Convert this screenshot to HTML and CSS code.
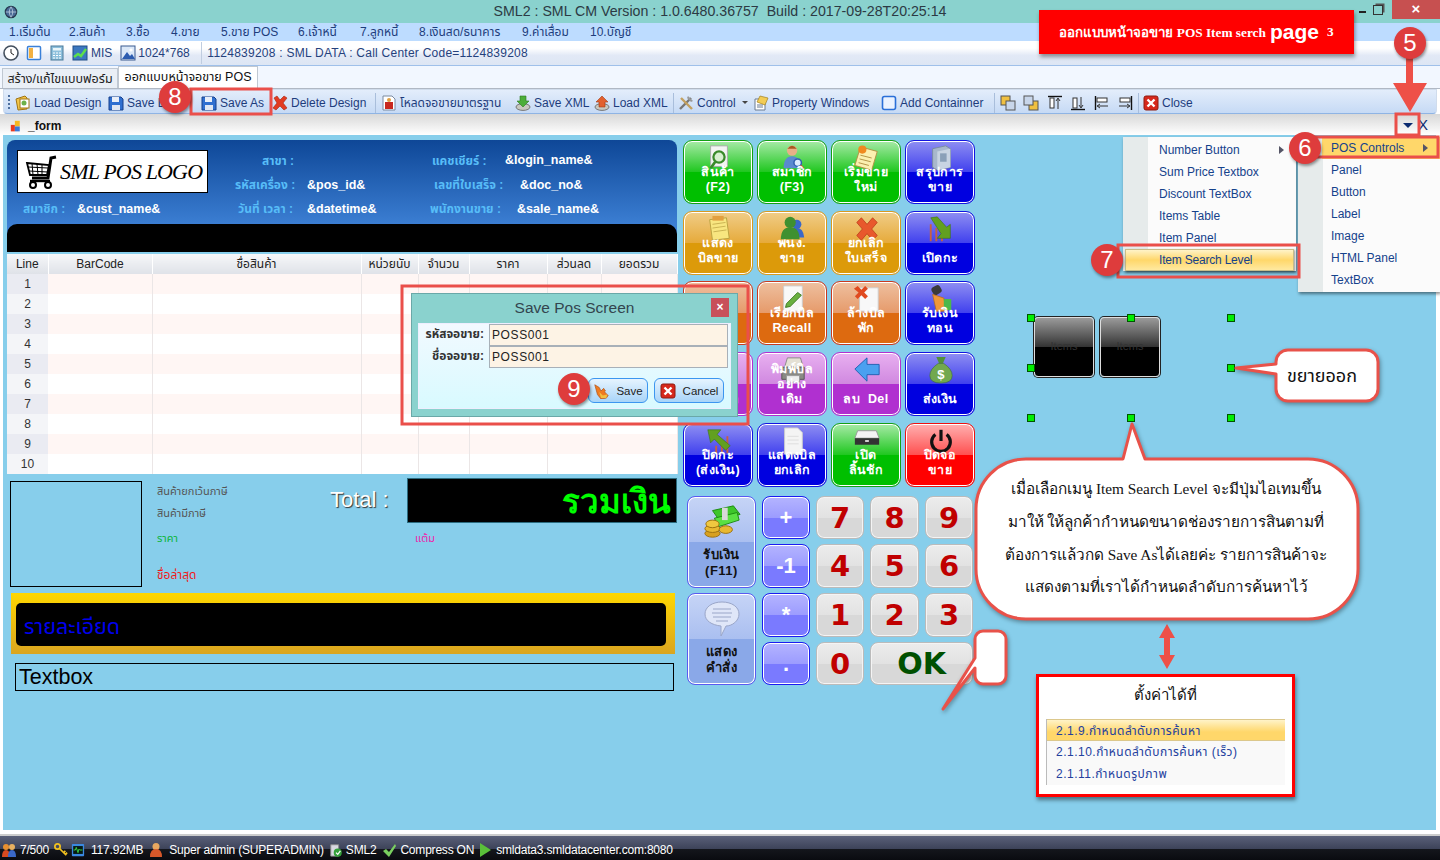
FILE: index.html
```html
<!DOCTYPE html>
<html lang="th">
<head>
<meta charset="utf-8">
<title>SML2 POS Designer</title>
<link rel="stylesheet" href="styles.css">
</head>
<body>
<svg class="defs" width="0" height="0" aria-hidden="true">
  <symbol id="i-win" viewBox="0 0 16 16"><circle cx="8" cy="8" r="6.5" fill="#4a6a96" stroke="#27384f" stroke-width="1.4"/><path d="M2 8h12M8 2q-4 6 0 12M8 2q4 6 0 12" stroke="#c8d8e8" fill="none" stroke-width=".8"/></symbol>
  <symbol id="i-floppy" viewBox="0 0 16 16"><path d="M1 2h12l2 2v11H1z" fill="#2f6fd0" stroke="#16408c"/><rect x="4" y="2" width="7" height="5" fill="#e8eef8"/><rect x="4" y="10" width="8" height="5" fill="#dfe6f2"/></symbol>
  <symbol id="i-load" viewBox="0 0 16 16"><path d="M1 4l9-3 2 2v11l-9 1z" fill="#f3c64a" stroke="#a07414"/><rect x="5" y="4" width="9" height="9" fill="#fff" stroke="#a07414"/><circle cx="9" cy="8" r="2.5" fill="#6cb14a"/></symbol>
  <symbol id="i-x" viewBox="0 0 16 16"><path d="M2 3l3-2 3 4 4-4 3 2-4 5 4 5-3 2-4-4-4 4-3-2 4-5z" fill="#e23b22" stroke="#a5240f" stroke-width=".6"/></symbol>
  <symbol id="i-docred" viewBox="0 0 16 16"><path d="M2 1h9l3 3v11H2z" fill="#fff" stroke="#7a8aa0"/><rect x="4" y="7" width="8" height="7" fill="#c8281e"/><circle cx="8" cy="5" r="2" fill="#e0a040"/></symbol>
  <symbol id="i-xmls" viewBox="0 0 16 16"><ellipse cx="8" cy="12" rx="7" ry="3.4" fill="#c8c8c0" stroke="#777"/><path d="M5 1h6v5h3l-6 6-6-6h3z" fill="#4cae3a" stroke="#2c7a20" stroke-width=".6"/></symbol>
  <symbol id="i-xmll" viewBox="0 0 16 16"><ellipse cx="8" cy="12" rx="7" ry="3.4" fill="#c8c8c0" stroke="#777"/><path d="M8 1l6 6h-3v5H5V7H2z" fill="#e2602e" stroke="#a33a12" stroke-width=".6"/></symbol>
  <symbol id="i-tools" viewBox="0 0 16 16"><path d="M2 14L13 3" stroke="#777" stroke-width="2.4"/><path d="M14 14L3 3" stroke="#c2a060" stroke-width="2.4"/><path d="M10 1l5 5-2 1-4-4z" fill="#999"/></symbol>
  <symbol id="i-prop" viewBox="0 0 16 16"><path d="M2 4h10v11H2z" fill="#fff" stroke="#6a7a90"/><path d="M7 1l8 2-3 7-8-3z" fill="#f2cc55" stroke="#a08020" stroke-width=".7"/><path d="M4 10h6M4 12h6" stroke="#6a7a90"/></symbol>
  <symbol id="i-box" viewBox="0 0 16 16"><rect x="1.5" y="1.5" width="13" height="13" rx="2" fill="#eaf2ff" stroke="#2a6fd8" stroke-width="1.6"/></symbol>
  <symbol id="i-al1" viewBox="0 0 16 16"><rect x="1" y="1" width="9" height="9" fill="#f0c040" stroke="#555"/><rect x="6" y="6" width="9" height="9" fill="#c8d6ea" stroke="#555"/></symbol>
  <symbol id="i-al2" viewBox="0 0 16 16"><rect x="6" y="6" width="9" height="9" fill="#f0c040" stroke="#555"/><rect x="1" y="1" width="9" height="9" fill="#c8d6ea" stroke="#555"/></symbol>
  <symbol id="i-al3" viewBox="0 0 16 16"><path d="M1 1.5h14" stroke="#111" stroke-width="1.4"/><rect x="3" y="3" width="4" height="10" fill="#fff" stroke="#333"/><path d="M11 14V4M9 6l2-3 2 3" stroke="#333" fill="none"/></symbol>
  <symbol id="i-al4" viewBox="0 0 16 16"><path d="M1 14.5h14" stroke="#111" stroke-width="1.4"/><rect x="3" y="3" width="4" height="10" fill="#fff" stroke="#333"/><path d="M11 2v10M9 10l2 3 2-3" stroke="#333" fill="none"/></symbol>
  <symbol id="i-al5" viewBox="0 0 16 16"><path d="M1.5 1v14" stroke="#111" stroke-width="1.4"/><rect x="3" y="3" width="10" height="4" fill="#fff" stroke="#333"/><path d="M14 11H4M6 9l-3 2 3 2" stroke="#333" fill="none"/></symbol>
  <symbol id="i-al6" viewBox="0 0 16 16"><path d="M14.5 1v14" stroke="#111" stroke-width="1.4"/><rect x="3" y="3" width="10" height="4" fill="#fff" stroke="#333"/><path d="M2 11h10M10 9l3 2-3 2" stroke="#333" fill="none"/></symbol>
  <symbol id="i-close" viewBox="0 0 16 16"><rect x="1" y="1" width="14" height="14" rx="2" fill="#d6281c" stroke="#8e1a10"/><path d="M4.5 4.5l7 7M11.5 4.5l-7 7" stroke="#fff" stroke-width="2.4"/></symbol>
  <symbol id="i-clock" viewBox="0 0 16 16"><circle cx="8" cy="8" r="7" fill="#fff" stroke="#44505e" stroke-width="1.6"/><path d="M8 4v4l3 2" stroke="#222" fill="none"/></symbol>
  <symbol id="i-panel" viewBox="0 0 16 16"><rect x="1.5" y="1.5" width="13" height="13" rx="1" fill="#fff" stroke="#3a80d8" stroke-width="1.5"/><rect x="3" y="3" width="4" height="10" fill="#f2b040"/></symbol>
  <symbol id="i-calc" viewBox="0 0 16 16"><rect x="2" y="1" width="12" height="14" fill="#8ec0dc" stroke="#4a7a9a"/><rect x="4" y="3" width="8" height="2.5" fill="#eaf6fa"/><path d="M4 8h8M4 10.5h8M4 13h8" stroke="#fff" stroke-dasharray="2 1"/></symbol>
  <symbol id="i-chart" viewBox="0 0 16 16"><rect x="1" y="1" width="14" height="14" fill="#3c78c0" stroke="#204e88"/><path d="M2 12l4-3 3 2 5-7" stroke="#5de04a" stroke-width="2.4" fill="none"/></symbol>
  <symbol id="i-pic" viewBox="0 0 16 16"><rect x="1" y="1" width="14" height="14" fill="#dbe8f8" stroke="#3a5a90"/><path d="M2 14l5-7 3 4 2-2 3 5z" fill="#2c5cb0"/><circle cx="11" cy="5" r="1.6" fill="#fff"/></symbol>
  <symbol id="i-form" viewBox="0 0 16 16"><rect x="1" y="6" width="5" height="8" fill="#e83a20"/><rect x="6" y="1" width="6" height="7" fill="#f6b820"/><rect x="6" y="8" width="6" height="6" fill="#3a78d8"/></symbol>
  <symbol id="i-cart" viewBox="0 0 34 34"><path d="M32 2l-5 1-3 20H8" stroke="#000" stroke-width="3" fill="none"/><path d="M3 8l22 2-2 10H6z" fill="#fff" stroke="#000" stroke-width="1.8"/><path d="M8 8l1 12M13 9l1 11M18 9l0 11M4 12l20 1M5 16l19 1" stroke="#000"/><path d="M6 26h20" stroke="#000" stroke-width="2.4"/><circle cx="9" cy="30" r="3" fill="#fff" stroke="#000" stroke-width="2"/><circle cx="24" cy="30" r="3" fill="#fff" stroke="#000" stroke-width="2"/></symbol>
  <symbol id="b-search" viewBox="0 0 30 30"><path d="M6 2h18v22H6z" fill="#f4f4f4" stroke="#aaa"/><circle cx="15" cy="14" r="6" fill="#d8f0d0" stroke="#3a8a2a" stroke-width="2.4"/><path d="M11 19l-5 7" stroke="#3a8a2a" stroke-width="3"/></symbol>
  <symbol id="b-member" viewBox="0 0 30 30"><circle cx="14" cy="7" r="5.5" fill="#e8b088"/><path d="M9 5q5-6 10 0z" fill="#a85a20"/><path d="M5 26q0-13 9-13t9 13z" fill="#5a8ad0"/><circle cx="20" cy="20" r="4" fill="#dcecff" stroke="#3060b0" stroke-width="1.6"/><path d="M23 23l3 3" stroke="#d04040" stroke-width="2"/></symbol>
  <symbol id="b-note" viewBox="0 0 30 30"><path d="M8 3l18 5-6 20-18-5z" fill="#fbf0b0" stroke="#b09040"/><path d="M8 12l12 3M7 16l12 3M6 20l11 3" stroke="#b09040"/><circle cx="10" cy="6" r="4.4" fill="#f08a20"/></symbol>
  <symbol id="b-server" viewBox="0 0 30 30"><path d="M6 5l14-3 5 3v20l-14 3-5-3z" fill="#a8b8cc" stroke="#788aa0"/><path d="M11 8l14-3v20l-14 3z" fill="#c8d4e2"/><rect x="14" y="10" width="7" height="9" fill="#8aa0b8"/></symbol>
  <symbol id="b-bill" viewBox="0 0 30 30"><path d="M5 5l18-2 3 22-18 2z" fill="#f8e680" stroke="#b8a040"/><path d="M8 10l14-2M8 14l14-2M9 18l14-2" stroke="#c8b050"/><rect x="8" y="1" width="12" height="5" fill="#e2a040"/></symbol>
  <symbol id="b-users" viewBox="0 0 30 30"><circle cx="19" cy="10" r="5" fill="#3a68c8"/><path d="M12 24q0-10 7-10t8 10z" fill="#3a68c8"/><circle cx="12" cy="8" r="6" fill="#3f9030"/><path d="M2 26q0-13 10-13t10 13z" fill="#3f9030"/></symbol>
  <symbol id="b-cross" viewBox="0 0 30 30"><path d="M4 8l5-5 6 7 6-7 5 5-6 7 6 7-5 5-6-7-6 7-5-5 6-7z" fill="#e8582c" stroke="#b83a18" stroke-width=".8"/></symbol>
  <symbol id="b-down" viewBox="0 0 30 30"><path d="M4 28V10M10 28V14M16 28V20" stroke="#c86040" stroke-width="2"/><path d="M4 3l7-1 10 11 4-3v15H11l4-5z" fill="#62a020" stroke="#3c7010" stroke-width=".6"/></symbol>
  <symbol id="b-recall" viewBox="0 0 30 30"><path d="M5 1h20v27H5z" fill="#f8f8f8" stroke="#ccc"/><path d="M8 20l12-12 4 3-12 12-5 1z" fill="#6ab040" stroke="#3c7a20"/></symbol>
  <symbol id="b-clear" viewBox="0 0 30 30"><path d="M7 3h20v25H7z" fill="#f8f8f8" stroke="#ccc"/><path d="M1 4l4-3 4 4 4-4 3 3-4 4 4 4-3 3-4-4-4 4-3-3 4-4z" fill="#e04a20"/></symbol>
  <symbol id="b-hand" viewBox="0 0 30 30"><rect x="5" y="1" width="10" height="9" rx="3" fill="#3a3a3a" transform="rotate(-30 10 5)"/><path d="M6 10l12 4 3 14H10z" fill="#f09838" stroke="#b86a18" stroke-width=".8"/><rect x="18" y="15" width="8" height="12" fill="#4cb84c"/></symbol>
  <symbol id="b-print" viewBox="0 0 30 30"><path d="M9 2h14l3 10H6z" fill="#e4e0d4" stroke="#888"/><path d="M3 12h24v13H3z" fill="#8a8a84" stroke="#555"/><path d="M8 21h14v7H8z" fill="#eee" stroke="#999"/><circle cx="15" cy="14" r="2" fill="#e2a020"/></symbol>
  <symbol id="b-left" viewBox="0 0 30 30"><path d="M2 14L15 2v7h13v11H15v7z" fill="#4aa0f0" stroke="#2060b0"/></symbol>
  <symbol id="b-bag" viewBox="0 0 30 30"><path d="M10 1h10l-3 7h-4z" fill="#52903a"/><path d="M12 8h6q9 6 9 13 0 8-12 8T3 21q0-7 9-13z" fill="#72a84e" stroke="#3c7028" stroke-width=".6"/><text x="15" y="25" text-anchor="middle" class="bag-t">$</text></symbol>
  <symbol id="b-up" viewBox="0 0 30 30"><path d="M12 28V20M18 28V16M24 28V10" stroke="#c86040" stroke-width="2"/><path d="M3 3h14l-4 5 14 12-5 5L10 13l-4 4z" fill="#62a020" stroke="#3c7010" stroke-width=".6"/></symbol>
  <symbol id="b-doc" viewBox="0 0 30 30"><path d="M6 1h14l5 5v23H6z" fill="#f4f4f4" stroke="#ccc"/><path d="M9 10h12M9 14h12M9 18h12" stroke="#ddd"/></symbol>
  <symbol id="b-drawer" viewBox="0 0 30 30"><path d="M5 4h20l3 8H2z" fill="#f4f4f4" stroke="#999"/><path d="M2 12h26v7H2z" fill="#333"/><rect x="13" y="14" width="4" height="2" fill="#ddd"/></symbol>
  <symbol id="b-power" viewBox="0 0 30 30"><path d="M9 8a10 10 0 1 0 12 0" fill="none" stroke="#111" stroke-width="3.4"/><path d="M15 3v12" stroke="#111" stroke-width="3.4"/></symbol>
  <symbol id="b-cash" viewBox="0 0 40 36"><path d="M10 6l22-5 7 9-22 6z" fill="#3ec62a" stroke="#1c8a10"/><path d="M12 14l24-6 2 8-22 7z" fill="#5ae042" stroke="#1c8a10"/><rect x="20" y="3" width="6" height="13" fill="#d8d8d8"/><ellipse cx="10" cy="30" rx="8" ry="4" fill="#d8a020" stroke="#9a7010"/><ellipse cx="10" cy="25" rx="8" ry="4" fill="#e8b830" stroke="#9a7010"/><ellipse cx="10" cy="20" rx="7" ry="4" fill="#f0c840" stroke="#9a7010"/><ellipse cx="24" cy="26" rx="7" ry="4" fill="#e8b830" stroke="#9a7010"/></symbol>
  <symbol id="b-bubble" viewBox="0 0 36 36"><path d="M18 1c10 0 17 5 17 12s-7 12-13 12l-5 10 0-10C8 24 1 20 1 13S8 1 18 1z" fill="#dfe6f8" stroke="#9aa6c8"/><path d="M9 8h18M8 12h20M9 16h18M12 20h12" stroke="#9aa6c8"/></symbol>
  <symbol id="s-users" viewBox="0 0 16 16"><circle cx="5" cy="5" r="3" fill="#e89030"/><path d="M1 15q0-7 4-7t4 7z" fill="#d84a20"/><circle cx="11" cy="5" r="3" fill="#e8b060"/><path d="M7 15q0-7 4-7t4 7z" fill="#3a68c8"/></symbol>
  <symbol id="s-key" viewBox="0 0 16 16"><circle cx="4" cy="4" r="3" fill="none" stroke="#f0c020" stroke-width="2"/><path d="M6 6l8 8M11 11l2-2M13 13l2-2" stroke="#f0c020" stroke-width="2"/></symbol>
  <symbol id="s-mon" viewBox="0 0 16 16"><rect x="1" y="1" width="14" height="14" rx="1" fill="#3a88e0"/><rect x="2.5" y="3.5" width="11" height="9" fill="#071a10"/><path d="M3 8h2l1-3 2 6 1-4 1 1h3" stroke="#3ce04a" fill="none"/></symbol>
  <symbol id="s-user" viewBox="0 0 16 16"><circle cx="8" cy="4.5" r="3.5" fill="#e8a860"/><path d="M2 15q0-8 6-8t6 8z" fill="#d8582a"/></symbol>
  <symbol id="s-db" viewBox="0 0 16 16"><path d="M2 2h9v13H2z" fill="#d8d8e0" stroke="#888"/><circle cx="10" cy="11" r="4.6" fill="#34a03a"/><path d="M8 11l2 2 3-4" stroke="#fff" fill="none" stroke-width="1.4"/></symbol>
  <symbol id="s-check" viewBox="0 0 16 16"><path d="M2 9l3-2 3 3 6-8 1 2-7 11z" fill="#7ad060"/></symbol>
  <symbol id="s-play" viewBox="0 0 16 16"><path d="M3 1l11 7-11 7z" fill="#5ac03a"/></symbol>
  <symbol id="s-saveb" viewBox="0 0 18 18"><path d="M2 2l5 3 2 4 3-3 2 3-1 1 4 4-2 3-6 1-4-5z" fill="#f07a20" stroke="#a84a10" stroke-width=".7"/><path d="M7 10l4 4 5-1-1 4-6 0z" fill="#f2c040"/></symbol>
</svg>

<div class="app">
  <header class="titlebar">
    <svg class="winicon"><use href="#i-win"/></svg>
    <span class="title-text">SML2 : SML CM Version : 1.0.6480.36757&nbsp; Build : 2017-09-28T20:25:14</span>
    <div class="winbtns">
      <span class="win-min"></span>
      <span class="win-restore"></span>
      <span class="win-close">×</span>
    </div>
  </header>

  <nav class="menubar">
    <span>1.เริ่มต้น</span><span>2.สินค้า</span><span>3.ซื้อ</span><span>4.ขาย</span><span>5.ขาย POS</span><span>6.เจ้าหนี้</span><span>7.ลูกหนี้</span><span>8.เงินสด/ธนาคาร</span><span>9.ค่าเสื่อม</span><span>10.บัญชี</span>
  </nav>

  <div class="infobar">
    <svg class="ic"><use href="#i-clock"/></svg>
    <svg class="ic"><use href="#i-panel"/></svg>
    <svg class="ic"><use href="#i-calc"/></svg>
    <svg class="ic"><use href="#i-chart"/></svg>
    <span class="info-mis">MIS</span>
    <svg class="ic"><use href="#i-pic"/></svg>
    <span class="info-res">1024*768</span>
    <span class="info-text">1124839208 : SML DATA : Call Center Code=1124839208</span>
  </div>

  <div class="tabs">
    <span class="tab">สร้าง/แก้ไขแบบฟอร์ม</span>
    <span class="tab tab-on">ออกแบบหน้าจอขาย POS</span>
  </div>

  <div class="toolbar">
    <span class="grip"></span>
    <span class="tool"><svg class="ic"><use href="#i-load"/></svg>Load Design</span>
    <span class="tool"><svg class="ic"><use href="#i-floppy"/></svg>Save L</span>
    <span class="tool"><svg class="ic"><use href="#i-floppy"/></svg>Save As</span>
    <span class="tool"><svg class="ic"><use href="#i-x"/></svg>Delete Design</span>
    <span class="sep"></span>
    <span class="tool"><svg class="ic"><use href="#i-docred"/></svg>โหลดจอขายมาตรฐาน</span>
    <span class="tool"><svg class="ic"><use href="#i-xmls"/></svg>Save XML</span>
    <span class="tool"><svg class="ic"><use href="#i-xmll"/></svg>Load XML</span>
    <span class="sep"></span>
    <span class="tool"><svg class="ic"><use href="#i-tools"/></svg>Control<i class="caret"></i></span>
    <span class="tool"><svg class="ic"><use href="#i-prop"/></svg>Property Windows</span>
    <span class="tool"><svg class="ic"><use href="#i-box"/></svg>Add Containner</span>
    <span class="sep"></span>
    <span class="tool"><svg class="ic"><use href="#i-al1"/></svg></span>
    <span class="tool"><svg class="ic"><use href="#i-al2"/></svg></span>
    <span class="tool"><svg class="ic"><use href="#i-al3"/></svg></span>
    <span class="tool"><svg class="ic"><use href="#i-al4"/></svg></span>
    <span class="tool"><svg class="ic"><use href="#i-al5"/></svg></span>
    <span class="tool"><svg class="ic"><use href="#i-al6"/></svg></span>
    <span class="sep"></span>
    <span class="tool"><svg class="ic"><use href="#i-close"/></svg>Close</span>
  </div>

  <div class="formbar">
    <svg class="ic"><use href="#i-form"/></svg>
    <b>_form</b>
    <span class="form-ctl"><i class="form-drop"></i><span class="form-x">X</span></span>
  </div>

  <main class="canvas">
    <section class="pos-head">
      <div class="logo"><svg class="logo-cart"><use href="#i-cart"/></svg><span>SML POS LOGO</span></div>
      <span class="hl hl-branch">สาขา :</span>
      <span class="hl hl-posid">รหัสเครื่อง :</span>
      <span class="hl hl-date">วันที่ เวลา :</span>
      <span class="hl hl-member">สมาชิก :</span>
      <span class="hl hl-cashier">แคชเชียร์ :</span>
      <span class="hl hl-doc">เลขที่ใบเสร็จ :</span>
      <span class="hl hl-sale">พนักงานขาย :</span>
      <span class="hv hv-login">&amp;login_name&amp;</span>
      <span class="hv hv-pos">&amp;pos_id&amp;</span>
      <span class="hv hv-doc">&amp;doc_no&amp;</span>
      <span class="hv hv-cust">&amp;cust_name&amp;</span>
      <span class="hv hv-date">&amp;datetime&amp;</span>
      <span class="hv hv-sale">&amp;sale_name&amp;</span>
      <div class="head-band"></div>
    </section>

    <table class="items">
      <colgroup><col class="c1"><col class="c2"><col class="c3"><col class="c4"><col class="c5"><col class="c6"><col class="c7"><col class="c8"></colgroup>
      <thead><tr><th>Line</th><th>BarCode</th><th>ชื่อสินค้า</th><th>หน่วยนับ</th><th>จำนวน</th><th>ราคา</th><th>ส่วนลด</th><th>ยอดรวม</th></tr></thead>
      <tbody>
        <tr><td>1</td><td></td><td></td><td></td><td></td><td></td><td></td><td></td></tr>
        <tr><td>2</td><td></td><td></td><td></td><td></td><td></td><td></td><td></td></tr>
        <tr><td>3</td><td></td><td></td><td></td><td></td><td></td><td></td><td></td></tr>
        <tr><td>4</td><td></td><td></td><td></td><td></td><td></td><td></td><td></td></tr>
        <tr><td>5</td><td></td><td></td><td></td><td></td><td></td><td></td><td></td></tr>
        <tr><td>6</td><td></td><td></td><td></td><td></td><td></td><td></td><td></td></tr>
        <tr><td>7</td><td></td><td></td><td></td><td></td><td></td><td></td><td></td></tr>
        <tr><td>8</td><td></td><td></td><td></td><td></td><td></td><td></td><td></td></tr>
        <tr><td>9</td><td></td><td></td><td></td><td></td><td></td><td></td><td></td></tr>
        <tr><td>10</td><td></td><td></td><td></td><td></td><td></td><td></td><td></td></tr>
      </tbody>
    </table>

    <div class="img-box"></div>
    <span class="lab lab-tax0">สินค้ายกเว้นภาษี</span>
    <span class="lab lab-tax1">สินค้ามีภาษี</span>
    <span class="lab lab-price">ราคา</span>
    <span class="lab lab-point">แต้ม</span>
    <span class="lab lab-last">ชื่อล่าสุด</span>
    <span class="total-lab">Total :</span>
    <div class="total-box">รวมเงิน</div>
    <div class="detail"><div class="detail-in">รายละเอียด</div></div>
    <div class="textbox">Textbox</div>

    <div class="btns">
      <button class="pb green"><svg class="pi"><use href="#b-search"/></svg>สินค้า<br>(F2)</button>
      <button class="pb green"><svg class="pi"><use href="#b-member"/></svg>สมาชิก<br>(F3)</button>
      <button class="pb green"><svg class="pi"><use href="#b-note"/></svg>เริ่มขาย<br>ใหม่</button>
      <button class="pb blue"><svg class="pi"><use href="#b-server"/></svg>สรุปการ<br>ขาย</button>
      <button class="pb gold"><svg class="pi"><use href="#b-bill"/></svg>แสดง<br>บิลขาย</button>
      <button class="pb gold"><svg class="pi"><use href="#b-users"/></svg>พนง.<br>ขาย</button>
      <button class="pb gold"><svg class="pi"><use href="#b-cross"/></svg>ยกเลิก<br>ใบเสร็จ</button>
      <button class="pb blue"><svg class="pi"><use href="#b-down"/></svg>เปิดกะ</button>
      <button class="pb orange">พักบิล</button>
      <button class="pb orange"><svg class="pi"><use href="#b-recall"/></svg>เรียกบิล<br>Recall</button>
      <button class="pb orange"><svg class="pi"><use href="#b-clear"/></svg>ล้างบิล<br>พัก</button>
      <button class="pb blue"><svg class="pi"><use href="#b-hand"/></svg>รับเงิน<br>ทอน</button>
      <button class="pb purple">พิมพ์บิล</button>
      <button class="pb purple"><svg class="pi"><use href="#b-print"/></svg>พิมพ์บิล<br>อย่าง<br>เดิม</button>
      <button class="pb purple"><svg class="pi"><use href="#b-left"/></svg>ลบ&nbsp; Del</button>
      <button class="pb blue"><svg class="pi"><use href="#b-bag"/></svg>ส่งเงิน</button>
      <button class="pb blue"><svg class="pi"><use href="#b-up"/></svg>ปิดกะ<br>(ส่งเงิน)</button>
      <button class="pb blue"><svg class="pi"><use href="#b-doc"/></svg>แสดงบิล<br>ยกเลิก</button>
      <button class="pb green"><svg class="pi"><use href="#b-drawer"/></svg>เปิด<br>ลิ้นชัก</button>
      <button class="pb red"><svg class="pi"><use href="#b-power"/></svg>ปิดจอ<br>ขาย</button>
    </div>

    <div class="pad">
      <button class="big big-a"><svg class="big-i"><use href="#b-cash"/></svg>รับเงิน<br>(F11)</button>
      <button class="op">+</button><button class="key">7</button><button class="key">8</button><button class="key">9</button>
      <button class="op">-1</button><button class="key">4</button><button class="key">5</button><button class="key">6</button>
      <button class="big big-b"><svg class="big-i"><use href="#b-bubble"/></svg>แสดง<br>คำสั่ง</button>
      <button class="op">*</button><button class="key">1</button><button class="key">2</button><button class="key">3</button>
      <button class="op">.</button><button class="key">0</button><button class="key key-ok">OK</button>
    </div>

    <div class="item-b item-b1">Items</div>
    <div class="item-b item-b2">Items</div>
    <span class="hd hd1"></span><span class="hd hd2"></span><span class="hd hd3"></span><span class="hd hd4"></span><span class="hd hd5"></span><span class="hd hd6"></span><span class="hd hd7"></span><span class="hd hd8"></span>

    <div class="dialog">
      <div class="dlg-title">Save Pos Screen<span class="dlg-x">×</span></div>
      <div class="dlg-body">
        <div class="dlg-row"><label>รหัสจอขาย:</label><span class="dlg-in">POSS001</span></div>
        <div class="dlg-row"><label>ชื่อจอขาย:</label><span class="dlg-in">POSS001</span></div>
        <div class="dlg-btns">
          <span class="dlg-btn"><svg class="ic"><use href="#s-saveb"/></svg>Save</span>
          <span class="dlg-btn"><svg class="ic"><use href="#i-close"/></svg>Cancel</span>
        </div>
      </div>
    </div>

    <ul class="menu menu-l">
      <li>Number Button<i class="sub"></i></li><li>Sum Price Textbox</li><li>Discount TextBox</li><li>Items Table</li><li>Item Panel</li><li class="hot">Item Search Level</li>
    </ul>
    <ul class="menu menu-r">
      <li class="hot2">POS Controls<i class="sub"></i></li><li>Panel</li><li>Button</li><li>Label</li><li>Image</li><li>HTML Panel</li><li>TextBox</li>
    </ul>

    <div class="setbox">
      <h3>ตั้งค่าได้ที่</h3>
      <ol class="setlist">
        <li class="on">2.1.9.กำหนดลำดับการค้นหา</li>
        <li>2.1.10.กำหนดลำดับการค้นหา (เร็ว)</li>
        <li>2.1.11.กำหนดรูปภาพ</li>
      </ol>
    </div>
  </main>

  <footer class="status">
    <svg class="ic"><use href="#s-users"/></svg><span>7/500</span>
    <svg class="ic ic-n"><use href="#s-key"/></svg><svg class="ic ic-n ic-m"><use href="#s-mon"/></svg><span>117.92MB</span>
    <svg class="ic ic-u"><use href="#s-user"/></svg><span>Super admin (SUPERADMIN)</span>
    <svg class="ic ic-n"><use href="#s-db"/></svg><span>SML2</span>
    <svg class="ic"><use href="#s-check"/></svg><span class="st-comp">Compress ON</span>
    <svg class="ic"><use href="#s-play"/></svg><span>smldata3.smldatacenter.com:8080</span>
  </footer>

  <svg class="annot" viewBox="0 0 1440 860">
    <g class="ann-line">
      <rect x="191" y="89" width="80" height="25"/>
      <rect x="1396" y="114" width="23" height="21"/>
      <rect x="1297" y="137" width="141" height="20"/>
      <rect x="1118" y="245" width="181" height="32"/>
      <rect x="402" y="286" width="346" height="138"/>
    </g>
    <path class="ann-fill" d="M1406 55h7v28h14l-17 29-17-29h13z"/>
    <path class="ann-fill" d="M1167 624l8 14h-5v17h5l-8 14-8-14h5v-17h-5l8-14z"/>
    <g class="ann-call">
      <path d="M1026 459h97l9-35 13 35h163a50 50 0 0 1 50 50v60a50 50 0 0 1-50 50h-282a50 50 0 0 1-50-50v-60a50 50 0 0 1 50-50z"/>
      <path d="M1288 350h78a12 12 0 0 1 12 12v27a12 12 0 0 1-12 12h-78a12 12 0 0 1-12-12v-15l-40-6 40-4v-2a12 12 0 0 1 12-12z"/>
      <path d="M983 631h15a8 8 0 0 1 8 8v37a8 8 0 0 1-8 8h-15a8 8 0 0 1-8-8v-8l-32 41 32-51v-19a8 8 0 0 1 8-8z"/>
    </g>
  </svg>

  <div class="banner"><span>ออกแบบหน้าจอขาย POS Item serch</span><b>page</b><span class="banner-n">3</span></div>
  <span class="num n5">5</span><span class="num n6">6</span><span class="num n7">7</span><span class="num n8">8</span><span class="num n9">9</span>
  <span class="call-small">ขยายออก</span>
  <p class="call-big">เมื่อเลือกเมนู Item Search Level จะมีปุ่มไอเทมขึ้น<br>มาให้ ให้ลูกค้ากำหนดขนาดช่องรายการสินตามที่<br>ต้องการแล้วกด Save Asได้เลยค่ะ รายการสินค้าจะ<br>แสดงตามที่เราได้กำหนดลำดับการค้นหาไว้</p>
</div>
</body>
</html>
```

FILE: styles.css
```css
* { box-sizing: border-box; }
html, body { margin: 0; height: 100%; overflow: hidden; }
body { font: 12px "Liberation Sans", "Noto Sans", "Noto Sans Thai", "Loma", "Garuda", sans-serif; color: #15428b; }
.defs { position: absolute; }
.ic { width: 16px; height: 16px; flex: none; display: block; }
.bag-t { font: bold 14px "Liberation Sans", sans-serif; fill: #fff; }

.app { position: relative; width: 1440px; height: 860px; display: flex; flex-direction: column; background: #fff; overflow: hidden; }

.titlebar { height: 23px; background: #8ad2ce; display: flex; align-items: center; justify-content: center; position: relative; flex: none; }
.winicon { position: absolute; left: 4px; top: 5px; width: 14px; height: 14px; }
.title-text { font-size: 14.2px; color: #2c3a44; position: relative; top: -1px; }
.winbtns { position: absolute; right: 0; top: 0; display: flex; align-items: flex-start; }
.win-min { width: 7px; height: 2px; background: #222; margin: 11px 7px 0 0; }
.win-restore { width: 10px; height: 10px; border: 1.5px solid #333; margin: 5px 9px 0 0; box-shadow: 2px -2px 0 -0.5px #555; }
.win-close { width: 48px; height: 19px; background: #c75050; color: #fff; font: bold 15px/18px "Liberation Sans", sans-serif; text-align: center; }

.menubar { height: 18px; background: #bddcff; flex: none; display: grid; grid-template-columns: 60px 57px 45px 50px 77px 62px 59px 103px 68px 60px; padding-left: 9px; line-height: 18px; color: #1d3c7c; }

.infobar { height: 25px; flex: none; display: flex; align-items: center; background: linear-gradient(#fff 0 30%, #e2e9f6 60%, #dde6f4); border-bottom: 1px solid #9fc0ea; padding-left: 3px; color: #25417c; }
.infobar .ic { margin-right: 7px; }
.infobar .ic:nth-of-type(4) { margin-right: 3px; }
.info-mis { margin-right: 8px; }
.infobar .ic:nth-of-type(5) { margin-right: 2px; }
.info-res { width: 63px; }
.info-text { border-left: 1px solid #c0cde0; padding-left: 5px; height: 22px; line-height: 22px; letter-spacing: .25px; }

.tabs { height: 23px; flex: none; display: flex; align-items: flex-end; padding-left: 2px; background: #f2f7ff; border-bottom: 1px solid #b0b8c4; }
.tab { width: 116px; height: 20px; line-height: 21px; text-align: center; background: #eaeff6; border: 1px solid #c0c8d2; border-bottom: 0; color: #222; white-space: nowrap; overflow: hidden; font-size: 12.5px; }
.tab-on { width: 140px; height: 22px; line-height: 21px; background: #fff; color: #111; }

.toolbar { height: 25px; flex: none; margin: 0 3px; display: grid; grid-template-columns: 7px 93px 93px 71px 103px 6px 134px 79px 79px 5px 75px 128px 113px 6px 23px 24px 23px 24px 23px 21px 5px auto; padding: 2px 0 0 4px; align-items: center; background: linear-gradient(#e3edfb, #c6daf5); border: 1px solid #d0dcec; border-bottom: 1px solid #8fb4e4; border-radius: 0 0 4px 4px; }
.grip { width: 2px; height: 16px; background: repeating-linear-gradient(#4d6f9f 0 2px, transparent 2px 4px); }
.tool { display: flex; align-items: center; gap: 3px; white-space: nowrap; overflow: hidden; color: #1d3c7c; }
.sep { width: 1px; height: 20px; background: #a9bedb; }
.caret { width: 0; height: 0; border: 3px solid transparent; border-top: 3px solid #444; margin: 3px 0 0 3px; }

.formbar { height: 21px; flex: none; display: flex; align-items: center; padding: 3px 0 0 10px; gap: 5px; background: linear-gradient(#d8d8d8, #fff); color: #111; position: relative; }
.formbar .ic { width: 13px; height: 13px; }
.form-ctl { position: absolute; right: 12px; top: 2px; display: flex; align-items: center; gap: 5px; }
.form-drop { width: 0; height: 0; border: 5px solid transparent; border-top: 5px solid #0a2a70; margin-top: 6px; }
.form-x { color: #0a2a70; font-size: 15px; }

.canvas { flex: none; height: 695px; position: relative; background: #87ceeb; box-shadow: inset 3px 0 #fff, inset -4px 0 #fff; }

.pos-head { position: absolute; left: 7px; top: 5px; width: 670px; height: 112px; border-radius: 8px 8px 0 0; background: linear-gradient(#0e4797, #4a90e6); }
.logo { position: absolute; left: 10px; top: 10px; width: 191px; height: 43px; background: #fff; border: 1px solid #000; display: flex; align-items: center; padding-left: 6px; color: #000; font: italic 22px "Liberation Serif", serif; white-space: nowrap; letter-spacing: -.85px; }
.logo-cart { width: 34px; height: 36px; margin-right: 2px; }
.hl, .hv { position: absolute; white-space: nowrap; line-height: 16px; font-weight: bold; }
.hl { color: #57bdf8; }
.hv { color: #fff; font-size: 12.5px; }
.hl-branch { left: 255px; top: 13px; }
.hl-posid { left: 228px; top: 37px; }
.hl-date { left: 231px; top: 61px; }
.hl-member { left: 16px; top: 61px; }
.hl-cashier { left: 425px; top: 13px; }
.hl-doc { left: 427px; top: 37px; }
.hl-sale { left: 423px; top: 61px; }
.hv-login { left: 498px; top: 12px; }
.hv-pos { left: 300px; top: 37px; }
.hv-doc { left: 513px; top: 37px; }
.hv-cust { left: 70px; top: 61px; }
.hv-date { left: 300px; top: 61px; }
.hv-sale { left: 510px; top: 61px; }
.head-band { position: absolute; left: 0; right: 0; bottom: 0; height: 28px; background: #000; border-radius: 10px 10px 0 0; }

.items { position: absolute; left: 7px; top: 119px; width: 670px; height: 220px; border-collapse: collapse; table-layout: fixed; color: #333; background: #fff; }
.c1 { width: 41px; } .c2 { width: 104px; } .c3 { width: 209px; } .c4 { width: 57px; } .c5 { width: 51px; } .c6 { width: 78px; } .c7 { width: 54px; } .c8 { width: 76px; }
.items th { height: 20px; padding: 0; font-weight: normal; background: linear-gradient(#f6f7f9, #dfe2e8); border-right: 1px solid #fff; color: #222; }
.items td { height: 20px; padding: 0; text-align: center; border-right: 1px solid #ebe6e6; }
.items td:first-child { background: #eaebf2; border-right: 0; }
.items tr:nth-child(odd) td:not(:first-child) { background: #fff6f4; }
.items tr:nth-child(even) td:first-child { background: #f4f5f8; }

.img-box { position: absolute; left: 10px; top: 346px; width: 132px; height: 106px; border: 1px solid #000; }
.lab { position: absolute; white-space: nowrap; line-height: 16px; font-size: 11px; }
.lab-tax0 { left: 157px; top: 348px; color: #555; }
.lab-tax1 { left: 157px; top: 370px; color: #555; }
.lab-price { left: 157px; top: 395px; color: #0bb53c; }
.lab-point { left: 415px; top: 395px; color: #ee22aa; }
.lab-last { left: 157px; top: 432px; color: #f01818; font-size: 12px; }
.total-lab { position: absolute; left: 330px; top: 351px; color: #fff; font-size: 22px; line-height: 28px; text-shadow: 1px 1px 1px #333; }
.total-box { position: absolute; left: 407px; top: 343px; width: 270px; height: 45px; background: #000; border: 1px solid #2c6c80; color: #0f0; font: bold 33px/46px "DejaVu Sans", "Noto Sans", sans-serif; text-align: right; white-space: nowrap; padding-right: 5px; }
.detail { position: absolute; left: 11px; top: 458px; width: 664px; height: 61px; padding: 10px 9px 8px 5px; background: linear-gradient(#ffd700, #daa520); }
.detail-in { height: 100%; border-radius: 5px; background: #000; color: #0000ee; font-size: 21.5px; line-height: 48px; padding-left: 8px; }
.textbox { position: absolute; left: 15px; top: 528px; width: 659px; height: 28px; border: 1px solid #000; color: #000; font-size: 21.5px; line-height: 27px; padding-left: 3px; }

.btns { position: absolute; left: 683px; top: 5px; display: grid; grid-template-columns: repeat(4, 70px); grid-template-rows: 71px 70px 71px 71px 64px; column-gap: 4px; }
.pb { position: relative; isolation: isolate; height: 64px; border-radius: 9px; padding: 0 0 8px; font: bold 12.5px/15px "Liberation Sans", "Noto Sans", sans-serif; letter-spacing: .4px; color: #fff; display: flex; flex-direction: column; justify-content: flex-end; align-items: center; text-align: center; box-shadow: inset 0 0 0 1px #fff; border: 1px solid; white-space: nowrap; }
.pi { position: absolute; left: 21px; top: 3px; width: 28px; height: 28px; z-index: -1; }
.green { border-color: #14a014; background: linear-gradient(#a7eaa7, #1fc71f 50%, #00bf00 50%); }
.blue { border-color: #1414e0; background: linear-gradient(#8f8ff2, #4040ee 50%, #0000e0 50%); }
.gold { border-color: #d89a20; background: linear-gradient(#f0cd88, #e6aa3a 50%, #dc9a0a 50%); }
.orange { border-color: #c83a20; background: linear-gradient(#eec0a0, #e69a6a 50%, #dd6a10 50%); }
.purple { border-color: #b030d0; background: linear-gradient(#e8b0f0, #d088e0 50%, #b030d0 50%); }
.red { border-color: #ee1010; background: linear-gradient(#ffb0b0, #ff5050 50%, #ff0000 50%); }

.pad { position: absolute; left: 687px; top: 361px; display: grid; grid-template-columns: 69px 48px 48px 49px 48px; grid-template-rows: 43px 44px 44px 43px; gap: 5px 6px; }
.pad button { border-radius: 8px; padding: 0; }
.big { grid-row: span 2; position: relative; display: flex; flex-direction: column; justify-content: flex-end; align-items: center; padding-bottom: 8px !important; border: 1px solid #5a5af0; box-shadow: inset 0 0 0 1px #fff; background: linear-gradient(#c6d4f6, #aabff0 50%, #8aa8e8 50%); color: #111; font: bold 13px/16px "Liberation Sans", "Noto Sans", sans-serif; letter-spacing: .5px; }
.big-i { position: absolute; left: 15px; top: 7px; width: 38px; height: 36px; }
.op { border: 1px solid #1c1cf0; box-shadow: inset 0 0 0 1px #fff; background: linear-gradient(#b4b4ff, #9c9cff 50%, #7a7aff 50%); color: #fff; font: bold 22px "Liberation Sans", sans-serif; }
.key { border: 1px solid #bbb; box-shadow: inset 0 0 0 1px #f4f4f4; background: linear-gradient(#ececec, #e2e2e2 50%, #d8d8d8 50%); color: #c00000; font: bold 29px "DejaVu Sans", sans-serif; }
.key-ok { grid-column: span 2; color: #005000; font-size: 30px; }

.item-b { position: absolute; top: 182px; width: 60px; height: 60px; border: 1px solid #ddd; border-radius: 4px; background: linear-gradient(#9a9a9a, #333 50%, #000 50%); color: #333; font-size: 11px; text-align: center; line-height: 56px; box-shadow: 0 0 0 1px #222; }
.item-b1 { left: 1034px; }
.item-b2 { left: 1100px; }
.hd { position: absolute; width: 8px; height: 8px; background: #0e0; border: 1px solid #050; }
.hd1 { left: 1027px; top: 179px; } .hd2 { left: 1127px; top: 179px; } .hd3 { left: 1227px; top: 179px; }
.hd4 { left: 1027px; top: 229px; } .hd5 { left: 1227px; top: 229px; }
.hd6 { left: 1027px; top: 279px; } .hd7 { left: 1127px; top: 279px; } .hd8 { left: 1227px; top: 279px; }

.dialog { position: absolute; left: 411px; top: 158px; width: 327px; height: 124px; background: #8ad2ce; border: 1px solid #6aa8a8; padding: 0 6px 7px; display: flex; flex-direction: column; }
.dlg-title { flex: none; height: 29px; line-height: 27px; text-align: center; font-size: 15.5px; color: #33454f; position: relative; }
.dlg-x { position: absolute; right: 2px; top: 4px; width: 18px; height: 19px; background: #c8505a; color: #fff; font: bold 12px/18px "Liberation Sans", sans-serif; }
.dlg-body { flex: 1; background: linear-gradient(#f2f9ff, #d8faff); padding: 0 2px 0 0; border: 1px solid #eef; }
.dlg-row { display: grid; grid-template-columns: 70px 1fr; height: 22px; }
.dlg-row label { text-align: right; font-weight: bold; font-size: 12px; line-height: 20px; color: #333; padding-right: 5px; }
.dlg-in { background: #fdf3e5; border: 1px solid #a8b0b8; padding-left: 2px; line-height: 20px; color: #222; letter-spacing: .6px; }
.dlg-btns { display: flex; justify-content: flex-end; gap: 6px; margin: 10px 4px 0 0; }
.dlg-btn { height: 25px; display: flex; align-items: center; justify-content: center; gap: 7px; border: 1px solid #3c96f0; border-radius: 6px; background: linear-gradient(#e6f4ff, #a8d4f8); color: #222; font-size: 11.5px; padding: 0 5px; }
.dlg-btn:first-child { width: 60px; }
.dlg-btn:last-child { width: 70px; }

.menu { position: absolute; top: 2px; margin: 0; padding: 0; list-style: none; background: linear-gradient(90deg, #e6ebeb 25px, #fbfbfb 25px); box-shadow: 1px 2px 3px rgba(0,0,0,.45); color: #15428b; }
.menu li { height: 22px; line-height: 22px; position: relative; white-space: nowrap; }
.menu-l { left: 1123px; width: 173px; padding-top: 2px; }
.menu-l li { padding-left: 36px; }
.menu-r { left: 1298px; width: 142px; height: 155px; }
.menu-r li { padding-left: 33px; }
.sub { position: absolute; right: 12px; top: 7px; width: 0; height: 0; border: 4px solid transparent; border-left: 5px solid #556; border-right: 0; }
.hot { margin: 0 2px; padding-left: 33px !important; background: linear-gradient(#fff3c8, #ffd76a 50%, #ffe9a0); border: 1px solid #c8bc88; box-shadow: 1px 1px 2px rgba(0,0,0,.4); line-height: 20px !important; letter-spacing: -.2px; }
.hot2 { background: linear-gradient(90deg, transparent 24px, #ffd76a 24px 100%); }

.setbox { position: absolute; left: 1036px; top: 539px; width: 259px; height: 123px; background: #fff; border: 3px solid #f00; box-shadow: 1px 3px 4px rgba(0,0,0,.45); color: #111; padding-top: 7px; }
.setbox h3 { margin: 0 0 13px; font: normal 15px/22px "Liberation Serif", serif; text-align: center; }
.setlist { margin: 0 7px; padding: 0; list-style: none; color: #23409e; background: #f9f9f9; border-left: 1px solid #bbb; letter-spacing: .5px; }
.setlist li { height: 22px; line-height: 22px; padding-left: 9px; white-space: nowrap; }
.setlist .on { background: linear-gradient(#fff3c8, #ffd76a 60%); border-top: 1px solid #dcc88c; border-bottom: 1px solid #dcc88c; }

.status { flex: none; height: 26px; margin-top: 4px; display: flex; align-items: center; gap: 3px; padding: 4px 0 0 1px; background: linear-gradient(#5a6078, #3c4258 55%, #14161c 55%, #0a0b10); color: #fff; white-space: nowrap; border-top: 2px solid #ccc; letter-spacing: -.2px; }
.status span { margin-right: 2px; }
.ic-n { width: 14px; }
.ic-m { margin-right: 3px; }
.ic-u { margin-right: 2px; }
.status .st-comp { margin-right: 0; }

.annot { position: absolute; left: 0; top: 0; width: 1440px; height: 860px; pointer-events: none; }
.ann-line rect { fill: none; stroke: #ea4f4a; stroke-width: 3; }
.ann-fill { fill: #ee5048; }
.ann-call path { fill: #fff; stroke: #e8524a; stroke-width: 3; stroke-linejoin: round; filter: drop-shadow(1px 2px 2px rgba(0,0,0,.35)); }

.banner { position: absolute; left: 1039px; top: 10px; width: 315px; height: 44px; background: #f00; color: #fff; display: flex; align-items: center; justify-content: center; gap: 4px; box-shadow: 1px 3px 4px rgba(0,0,0,.4); font: bold 13.3px "Liberation Serif", serif; white-space: nowrap; }
.banner b { font: bold 21px "Liberation Sans", sans-serif; }
.banner-n { margin-left: 4px; }
.num { position: absolute; width: 32px; height: 32px; border-radius: 50%; background: #de3c3c; color: #fff; font: 24px/31px "Liberation Sans", sans-serif; text-align: center; box-shadow: 1px 2px 3px rgba(0,0,0,.4); }
.n5 { left: 1394px; top: 27px; }
.n6 { left: 1289px; top: 132px; }
.n7 { left: 1091px; top: 244px; }
.n8 { left: 159px; top: 81px; }
.n9 { left: 558px; top: 373px; }
.call-small { position: absolute; left: 1287px; top: 363px; font-size: 18px; line-height: 26px; color: #111; white-space: nowrap; }
.call-big { position: absolute; left: 984px; top: 473px; width: 364px; margin: 0; font: 15.3px/32.8px "Liberation Serif", serif; color: #111; text-align: center; white-space: nowrap; }
```
